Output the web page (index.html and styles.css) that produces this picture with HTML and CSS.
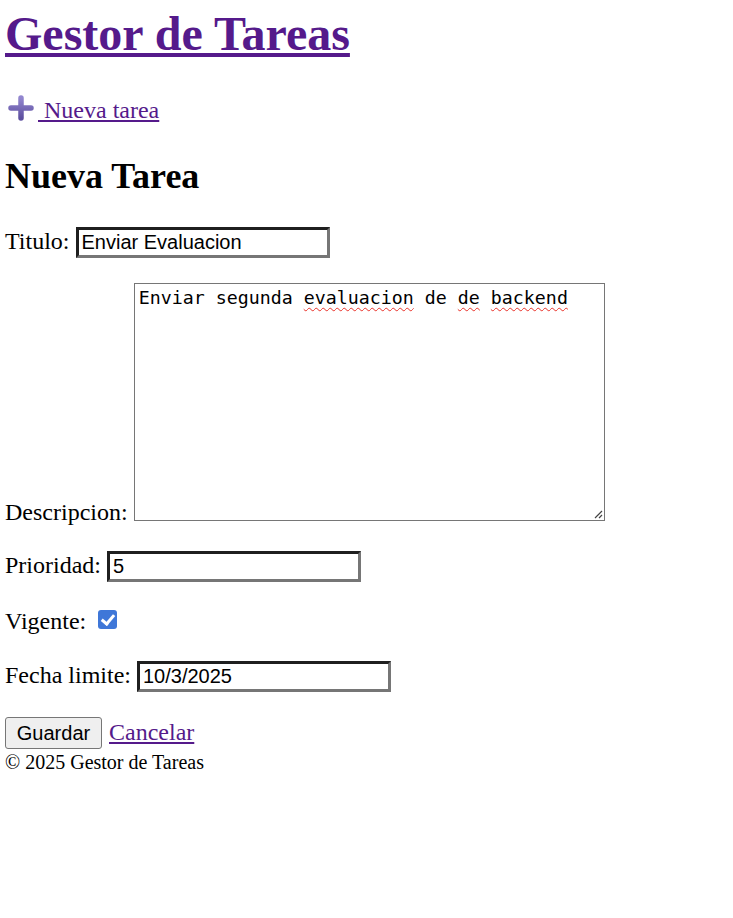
FILE: index.html
```html
<!DOCTYPE html>
<html lang="es">
<head>
<meta charset="utf-8">
<title>Gestor de Tareas</title>
<link rel="stylesheet" href="styles.css">
</head>
<body>
<header>
  <h1 class="brand"><a href="#">Gestor de Tareas</a></h1>
  <p class="new-link"><a href="#"><svg class="plus" width="26" height="26" viewBox="0 0 26 26" aria-hidden="true"><defs><linearGradient id="pg" x1="0" y1="0" x2="0" y2="1"><stop offset="0" stop-color="#9286cf"/><stop offset="1" stop-color="#5d4f9f"/></linearGradient></defs><path d="M13 3 V23 M3 13 H23" stroke="url(#pg)" stroke-width="5.5" stroke-linecap="round" fill="none"/></svg> Nueva tarea</a></p>
</header>
<main>
  <h2 class="title">Nueva Tarea</h2>
  <form class="task-form">
    <div class="row">
      <label class="lbl" for="t">Titulo:</label>
      <input class="field" id="t" type="text" value="Enviar Evaluacion">
    </div>
    <div class="row row-end">
      <label class="lbl lbl-desc">Descripcion:</label>
      <div class="area" contenteditable="true" role="textbox" aria-multiline="true">Enviar segunda <span class="sp">evaluacion</span> de <span class="sp">de</span> <span class="sp">backend</span><svg class="grip" width="10" height="10" viewBox="0 0 10 10" aria-hidden="true"><path d="M9 2 L2 9 M9 6 L6 9" stroke="#444" stroke-width="1.2" fill="none"/></svg></div>
    </div>
    <div class="row">
      <label class="lbl" for="p">Prioridad:</label>
      <input class="field" id="p" type="text" value="5">
    </div>
    <div class="row row-check">
      <label class="lbl" for="v">Vigente:</label>
      <input class="check" id="v" type="checkbox" checked>
    </div>
    <div class="row">
      <label class="lbl" for="f">Fecha limite:</label>
      <input class="field" id="f" type="text" value="10/3/2025">
    </div>
    <div class="row row-actions">
      <button class="btn" type="button">Guardar</button>
      <a class="cancel" href="#">Cancelar</a>
    </div>
  </form>
</main>
<footer class="foot">© 2025 Gestor de Tareas</footer>
</body>
</html>
```
FILE: styles.css
```css
html, body {
  background: #fff;
}
body {
  margin: 0;
  padding: 0 0 0 5px;
  font-family: "Liberation Serif", "Times New Roman", serif;
  font-size: 24px;
  color: #000;
}
a {
  color: #551a8b;
}
.brand {
  margin: 6px 0 0;
  font-size: 48px;
  line-height: 56px;
  font-weight: bold;
}
.new-link {
  margin: 33px 0 0;
  line-height: 28px;
}
.plus {
  vertical-align: -3px;
  margin-left: 3px;
  margin-right: 4px;
}
.title {
  margin: 31px 0 0;
  font-size: 36px;
  line-height: 42px;
  font-weight: bold;
}
.task-form {
  margin: 0;
}
.row {
  display: flex;
  align-items: baseline;
  gap: 6px;
  margin-top: 30px;
}
.lbl {
  line-height: 28px;
  white-space: nowrap;
}
.field {
  box-sizing: border-box;
  width: 254px;
  height: 31px;
  margin: 0;
  padding: 1px 3px;
  border-width: 3px;
  border-style: solid;
  border-color: #1f1f1f #767676 #767676 #1f1f1f;
  font-family: "Liberation Sans", Arial, sans-serif;
  font-size: 20px;
  line-height: 23px;
  color: #000;
  background: #fff;
  outline: none;
}
.row-end {
  align-items: flex-end;
  margin-top: 25px;
}
.lbl-desc {
  line-height: 18px;
}
.area {
  position: relative;
  box-sizing: border-box;
  width: 471px;
  height: 238px;
  padding: 3px 4px;
  border: 1px solid #767676;
  font-family: "DejaVu Sans Mono", "Liberation Mono", monospace;
  font-size: 18.3px;
  line-height: 21px;
  color: #000;
  outline: none;
  white-space: pre-wrap;
}
.sp {
  text-decoration: underline wavy #e8322a;
  text-decoration-thickness: 1px;
  text-underline-offset: 3px;
}
.grip {
  position: absolute;
  right: 1px;
  bottom: 1px;
}
.row-check {
  align-items: flex-start;
  margin-top: 25px;
}
.check {
  appearance: none;
  -webkit-appearance: none;
  position: relative;
  box-sizing: border-box;
  width: 19px;
  height: 19px;
  margin: 3px 0 0 6px;
  border-radius: 3px;
  background: #3f77d8;
}
.check::after {
  content: "";
  position: absolute;
  left: 6px;
  top: 2px;
  width: 5px;
  height: 10px;
  border: solid #fff;
  border-width: 0 3px 3px 0;
  transform: rotate(40deg);
}
.row-check + .row {
  margin-top: 26px;
}
.row-actions {
  margin-top: 25px;
  gap: 7px;
}
.btn {
  box-sizing: border-box;
  width: 97px;
  height: 32px;
  margin: 0;
  padding: 0;
  border: 1px solid #767676;
  border-radius: 3px;
  background: #efefef;
  font-family: "Liberation Sans", Arial, sans-serif;
  font-size: 20px;
  color: #000;
}
.cancel {
  line-height: 28px;
}
.foot {
  margin-top: 1px;
  font-size: 20px;
  line-height: 24px;
}
```
